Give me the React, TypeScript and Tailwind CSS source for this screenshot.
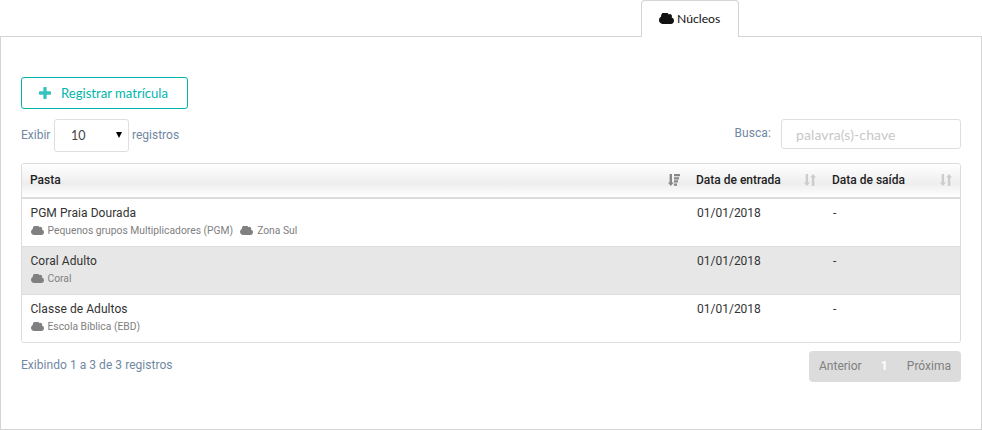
import React from "react";

const CloudIcon = (props: any) => (
  <svg
    viewBox="0 256 1920 1280"
    preserveAspectRatio="none"
    fill="currentColor"
    className={props.className}
  >
    <path d="M1920 1152q0 159-112.5 271.5t-271.5 112.5h-1088q-185 0-316.5-131.5t-131.5-316.5q0-130 70-240t188-165q-2-28-2-43 0-212 150-362t362-150q156 0 283.5 86.5t187.5 225.5q71-62 166-62 106 0 181 75t75 181q0 76-41 138 130 31 213.5 135.5t83.5 238.5z" />
  </svg>
);

const PlusIcon = () => (
  <svg viewBox="192 128 1408 1408" fill="currentColor" className="w-3 h-3 opacity-80">
    <path d="M1600 736v192q0 40-28 68t-68 28h-416v416q0 40-28 68t-68 28h-192q-40 0-68-28t-28-68v-416h-416q-40 0-68-28t-28-68v-192q0-40 28-68t68-28h416v-416q0-40 28-68t68-28h192q40 0 68 28t28 68v416h416q40 0 68 28t28 68z" />
  </svg>
);

const SortedIcon = () => (
  <svg viewBox="0 0 12 12" fill="currentColor" className="w-3 h-3 text-[#888]">
    <path d="M1.6 0h2.4v8.6h1.8L2.8 12 0 8.6h1.6zM6 0h6v2.3H6zM6 3.2h5v2.2H6zM6 6.3h4v2.2H6zM6 9.5h3v2.2H6z" />
  </svg>
);

const SortIcon = () => (
  <svg viewBox="0 0 12 12" fill="currentColor" className="w-3 h-3 text-[#ccc]">
    <path d="M1.7 0h2.4v8.4h1.7L2.9 12 0 8.4h1.7zM7.9 12h2.4V3.6H12L9.1 0 6.2 3.6h1.7z" />
  </svg>
);

const rows = [
  {
    name: "PGM Praia Dourada",
    tags: ["Pequenos grupos Multiplicadores (PGM)", "Zona Sul"],
    start: "01/01/2018",
    end: "-",
  },
  { name: "Coral Adulto", tags: ["Coral"], start: "01/01/2018", end: "-" },
  {
    name: "Classe de Adultos",
    tags: ["Escola Bíblica (EBD)"],
    start: "01/01/2018",
    end: "-",
  },
];

const App = () => {
  const [search, setSearch] = React.useState("");

  return (
    <div className="w-[982px] h-[430px] bg-white flex flex-col font-['Roboto',sans-serif] text-xs text-[#333]">
      <div className="h-[37px] flex shrink-0">
        <div className="w-[641px] border-b border-[#d4d4d5]" />
        <div className="w-[98px] border border-b-0 border-[#d4d4d5] rounded-t-[4px] flex items-center pl-[17px] gap-[3px] font-['Lato',sans-serif] text-[12.2px] text-[#111]">
          <CloudIcon className="w-[15px] h-[11px] mb-px" />
          <span>Núcleos</span>
        </div>
        <div className="flex-1 border-b border-[#d4d4d5]" />
      </div>

      <div className="flex-1 border border-t-0 border-[#d4d4d5] px-5 pt-10">
        <button className="w-[167px] h-8 border border-[#00b5ad] rounded-[3px] text-[#00b5ad] flex items-center pl-[17px] gap-[10px] font-['Lato',sans-serif] text-[13.1px]">
          <PlusIcon />
          <span className="pt-[2px]">Registrar matrícula</span>
        </button>

        <div className="flex justify-between mt-[10px] h-[33px] text-[#7188a2]">
          <div className="flex items-center">
            <span className="w-[33px] pb-[2px]">Exibir</span>
            <div className="w-[75px] h-[33px] border border-[#dededf] rounded-[3px] flex items-center justify-between pl-4 pr-[6px] text-[#444]">
              <span className="pt-[2px] text-[12.5px] font-['Lato',sans-serif]">10</span>
              <svg viewBox="0 0 6 6" className="w-[6px] h-[6px] mb-[2px] text-black" fill="currentColor">
                <path d="M0 0h6L3 6z" />
              </svg>
            </div>
            <span className="pl-[3px] pb-[2px]">registros</span>
          </div>
          <div className="flex">
            <span className="pt-[6px] mr-[10px] tracking-[0.1px]">Busca:</span>
            <input
              type="text"
              value={search}
              onChange={(e) => setSearch(e.target.value)}
              placeholder="palavra(s)-chave"
              className="w-[180px] h-[30px] border border-[#dededf] rounded-[3px] px-[14px] font-['Lato',sans-serif] text-[14px] tracking-[0.1px] outline-none placeholder:text-[#c8c8c8]"
            />
          </div>
        </div>

        <div className="mt-[11px] border border-[#dcdcdd] rounded-[3px] overflow-hidden">
          <div className="h-[35px] pb-[2px] grid grid-cols-[666px_136px_136px] items-center border-b-2 border-[#dcdcdd] bg-linear-to-b from-white via-[#eeeeee] via-60% to-white font-medium text-[#222]">
            <div className="pl-2 pr-2 flex items-center justify-between">
              Pasta <SortedIcon />
            </div>
            <div className="pl-2 pr-2 flex items-center justify-between">
              Data de entrada <SortIcon />
            </div>
            <div className="pl-2 pr-2 flex items-center justify-between">
              Data de saída <SortIcon />
            </div>
          </div>
          {rows.map((row, i) => (
            <div
              key={row.name}
              className={`grid grid-cols-[666px_136px_136px] h-12 pt-[6px] border-b border-[#dcdcdd] last:border-b-0 last:h-[47px] ${
                i === 1 ? "bg-[#e7e7e7]" : "bg-white"
              }`}
            >
              <div className="pl-2">
                <p className="leading-4 tracking-[0.06px] pl-[0.5px]">{row.name}</p>
                <div className="flex gap-[7px] mt-[3px] pl-[0.5px] text-[10.3px] leading-[14px] text-[#808080]">
                  {row.tags.map((tag) => (
                    <span key={tag} className="flex items-center gap-[5px]">
                      <CloudIcon className="w-[13px] h-[9px] -mr-px mb-px" />
                      {tag}
                    </span>
                  ))}
                </div>
              </div>
              <div className="pl-[9px] leading-4">{row.start}</div>
              <div className="pl-[9px] leading-4">{row.end}</div>
            </div>
          ))}
        </div>

        <div className="flex justify-between mt-2">
          <span className="pt-[6px] leading-4 tracking-[0.04px] text-[#7188a2]">
            Exibindo 1 a 3 de 3 registros
          </span>
          <div className="w-[152px] h-[31px] pb-[2px] rounded-[4px] bg-[#dcdcdc] flex items-center justify-between px-[10px] text-[#808080]">
            <span>Anterior</span>
            <span className="font-bold text-white">1</span>
            <span>Próxima</span>
          </div>
        </div>
      </div>
    </div>
  );
};

export default App;
